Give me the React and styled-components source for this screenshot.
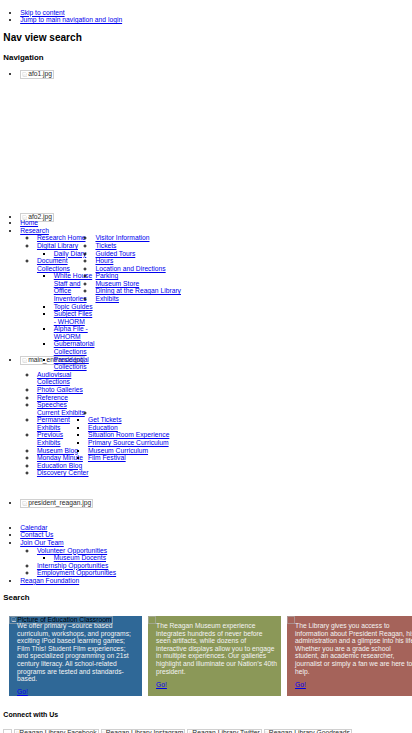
import React from "react";
import styled, { createGlobalStyle } from "styled-components";

const GlobalStyle = createGlobalStyle`
  html { scrollbar-width: none; background: #ffffff; }
  html, body { margin: 0; padding: 0; }
  body {
    font-family: "Liberation Sans", Arial, Helvetica, sans-serif;
    font-size: 6.73px;
    line-height: 7.58px;
    color: #000000;
  }
  ul { margin: 0; }
`;

const Page = styled.div`
  display: flow-root;
  padding-left: 3.36px;
  overflow-x: clip;
`;

const A = styled.a`
  color: #0000ee;
  text-decoration: underline;
`;

const SkipLinks = styled.ul`
  margin-top: 8.5px !important;
  padding-left: 16.8px;
  list-style-type: disc;
`;

const Title = styled.h1`
  margin: 8.2px 0 0;
  font-size: 10.09px;
  line-height: 11.6px;
  font-weight: 700;
`;

const Heading = styled.h2`
  margin: ${(p) => p.$mt} 0 0;
  font-size: ${(p) => p.$size || "7.87px"};
  line-height: 9px;
  font-weight: 700;
`;

const Stage = styled.div`
  display: grid;
  margin-top: 8.4px;
  & > * {
    grid-area: 1 / 1;
  }
`;

const Slides = styled.ul`
  padding-left: 16.8px;
  list-style-type: disc;
`;

const Slide = styled.li`
  height: ${(p) => p.$h};
`;

const Frame = styled.span`
  display: inline-block;
  box-sizing: border-box;
  border: 1px solid rgba(176, 176, 176, 0.6);
  padding: 0 1px 0 ${(p) => p.$pad || "0.5px"};
  line-height: ${(p) => p.$lh || "6.6px"};
  color: ${(p) => p.$ink || "#2a2a2a"};
  white-space: nowrap;
  vertical-align: baseline;
  ${(p) => (p.$w ? `width: ${p.$w};` : "")}
  ${(p) => (p.$h ? `height: ${p.$h};` : "")}
`;

const IconSvg = styled.svg`
  display: inline-block;
  vertical-align: middle;
  margin-right: ${(p) => p.$gap};
`;

function BrokenIcon({ size = 5.5, gap = "1px" }) {
  return (
    <IconSvg width={size} height={size} viewBox="0 0 16 16" $gap={gap}>
      <path
        d="M2 1.5h8.5l3.5 3.5v4.2l-2.4-1.6-2.6 2.2-2.6-2-4.4 3.4z"
        fill="none"
        stroke="#c4c4c4"
        strokeWidth="1.1"
      />
      <path d="M2 13.8l4.4-2.8 2.6 2 2.6-2.2 2.4 1.6v2.2H2z" fill="#dcdcdc" />
    </IconSvg>
  );
}

function BrokenImage({ alt, lh, ink, size, gap, pad, w, h }) {
  return (
    <Frame $lh={lh} $ink={ink} $pad={pad} $w={w} $h={h}>
      {alt ? (
        <>
          <BrokenIcon size={size} gap={gap} />
          {alt}
        </>
      ) : null}
    </Frame>
  );
}

const Menu = styled.ul`
  padding: 149px 0 0 16.8px;
  list-style-type: disc;
`;

const MegaRow = styled.div`
  display: flex;
  align-items: flex-start;
`;

const SubColumn = styled.ul`
  flex: none;
  box-sizing: content-box;
  width: ${(p) => p.$w || "auto"};
  padding-left: ${(p) => (p.$flush ? "0" : "16.8px")};
  list-style-type: ${(p) => p.$marker || "circle"};
  white-space: ${(p) => (p.$nowrap ? "nowrap" : "normal")};
`;

const DeepList = styled.ul`
  padding-left: 16.8px;
  list-style-type: ${(p) => p.$marker || "square"};
`;

const ColumnLabel = styled.div`
  flex: none;
  width: 58.5px;
  padding-left: 16.8px;
`;

const SiteLinks = styled.ul`
  margin-top: 14.6px !important;
  padding-left: 16.8px;
  list-style-type: disc;
`;

const Cards = styled.div`
  display: flex;
  gap: 6px;
  margin-top: 13.7px;
  padding-left: 6px;
`;

const Card = styled.div`
  flex: none;
  width: 133px;
  background: ${(p) => p.$bg};
  color: #f3f3f3;
`;

const CardMedia = styled.div`
  height: 6.5px;
  display: flex;
  align-items: flex-start;
`;

const CardBody = styled.div`
  padding-left: 7.7px;
`;

const CardText = styled.p`
  margin: 0;
  white-space: nowrap;
`;

const CardAction = styled.p`
  margin: 5.6px 0 0;
`;

const SocialRow = styled.div`
  display: flex;
  align-items: flex-start;
  gap: 1.9px;
  margin-top: 9.4px;
`;

const cards = [
  {
    bg: "#2f6897",
    alt: "Picture of Education Classroom",
    lines: [
      "We offer primary \u2013source based",
      "curriculum, workshops, and programs;",
      "exciting iPod based learning games;",
      "Film This! Student Film experiences;",
      "and specialized programming on 21st",
      "century literacy. All school-related",
      "programs are tested and standards-",
      "based.",
    ],
  },
  {
    bg: "#8b9858",
    lines: [
      "The Reagan Museum experience",
      "integrates hundreds of never before",
      "seen artifacts, while dozens of",
      "interactive displays allow you to engage",
      "in multiple experiences.  Our galleries",
      "highlight and illuminate our Nation\u2019s 40th",
      "president.",
    ],
  },
  {
    bg: "#a5635a",
    lines: [
      "The Library gives you access to",
      "information about President Reagan, his",
      "administration and a glimpse into his life.",
      "Whether you are a grade school",
      "student, an academic researcher,",
      "journalist or simply a fan we are here to",
      "help.",
    ],
  },
];

const slides = [
  { file: "afo1.jpg", h: "143px" },
  { file: "afo2.jpg", h: "143px" },
  { file: "main_entrance.jpg", h: "143px" },
  { file: "president_reagan.jpg", h: "10px" },
];

const socials = [
  "Reagan Library Facebook",
  "Reagan Library Instagram",
  "Reagan Library Twitter",
  "Reagan Library Goodreads",
];

export default function App() {
  return (
    <Page>
      <GlobalStyle />
      <SkipLinks>
        <li>
          <A href="#content">Skip to content</A>
        </li>
        <li>
          <A href="#nav">Jump to main navigation and login</A>
        </li>
      </SkipLinks>

      <Title>Nav view search</Title>
      <Heading $mt="9.4px">Navigation</Heading>

      <Stage>
        <Slides>
          {slides.map((s) => (
            <Slide key={s.file} $h={s.h}>
              <BrokenImage alt={s.file} />
            </Slide>
          ))}
        </Slides>

        <Menu>
          <li>
            <A href="#">Home</A>
          </li>
          <li>
            <A href="#">Research</A>
            <MegaRow>
              <SubColumn $w="58.5px">
                <li>
                  <A href="#">Research Home</A>
                </li>
                <li>
                  <A href="#">Digital Library</A>
                  <DeepList>
                    <li>
                      <A href="#">Daily Diary</A>
                    </li>
                  </DeepList>
                </li>
                <li>
                  <A href="#">Document Collections</A>
                  <DeepList>
                    <li>
                      <A href="#">White House Staff and Office Inventories</A>
                    </li>
                    <li>
                      <A href="#">Topic Guides</A>
                    </li>
                    <li>
                      <A href="#">Subject Files - WHORM</A>
                    </li>
                    <li>
                      <A href="#">Alpha File - WHORM</A>
                    </li>
                    <li>
                      <A href="#">Gubernatorial Collections</A>
                    </li>
                    <li>
                      <A href="#">Presidential Collections</A>
                    </li>
                  </DeepList>
                </li>
                <li>
                  <A href="#">Audiovisual Collections</A>
                </li>
                <li>
                  <A href="#">Photo Galleries</A>
                </li>
                <li>
                  <A href="#">Reference</A>
                </li>
                <li>
                  <A href="#">Speeches</A>
                </li>
              </SubColumn>
              <SubColumn $flush>
                <li>
                  <A href="#">Visitor Information</A>
                </li>
                <li>
                  <A href="#">Tickets</A>
                </li>
                <li>
                  <A href="#">Guided Tours</A>
                </li>
                <li>
                  <A href="#">Hours</A>
                </li>
                <li>
                  <A href="#">Location and Directions</A>
                </li>
                <li>
                  <A href="#">Parking</A>
                </li>
                <li>
                  <A href="#">Museum Store</A>
                </li>
                <li>
                  <A href="#">Dining at the Reagan Library</A>
                </li>
                <li>
                  <A href="#">Exhibits</A>
                </li>
              </SubColumn>
            </MegaRow>
            <MegaRow>
              <ColumnLabel>
                <A href="#">Current Exhibits</A>
              </ColumnLabel>
              <SubColumn $flush>
                <li>{"\u00a0"}</li>
              </SubColumn>
            </MegaRow>
            <MegaRow>
              <SubColumn $w="51px" $nowrap>
                <li>
                  <A href="#">
                    Permanent
                    <br />
                    Exhibits
                  </A>
                </li>
                <li>
                  <A href="#">
                    Previous
                    <br />
                    Exhibits
                  </A>
                </li>
                <li>
                  <A href="#">Museum Blog</A>
                </li>
                <li>
                  <A href="#">Monday Minute</A>
                </li>
                <li>
                  <A href="#">Education Blog</A>
                </li>
                <li>
                  <A href="#">Discovery Center</A>
                </li>
              </SubColumn>
              <SubColumn $flush $marker="square">
                <li>
                  <A href="#">Get Tickets</A>
                </li>
                <li>
                  <A href="#">Education</A>
                </li>
                <li>
                  <A href="#">Situation Room Experience</A>
                </li>
                <li>
                  <A href="#">Primary Source Curriculum</A>
                </li>
                <li>
                  <A href="#">Museum Curriculum</A>
                </li>
                <li>
                  <A href="#">Film Festival</A>
                </li>
              </SubColumn>
            </MegaRow>
          </li>
        </Menu>
      </Stage>

      <SiteLinks>
        <li>
          <A href="#">Calendar</A>
        </li>
        <li>
          <A href="#">Contact Us</A>
        </li>
        <li>
          <A href="#">Join Our Team</A>
          <DeepList $marker="circle">
            <li>
              <A href="#">Volunteer Opportunities</A>
              <DeepList $marker="square">
                <li>
                  <A href="#">Museum Docents</A>
                </li>
              </DeepList>
            </li>
            <li>
              <A href="#">Internship Opportunities</A>
            </li>
            <li>
              <A href="#">Employment Opportunities</A>
            </li>
          </DeepList>
        </li>
        <li>
          <A href="#">Reagan Foundation</A>
        </li>
      </SiteLinks>

      <Heading $mt="8.5px">Search</Heading>

      <Cards>
        {cards.map((c, i) => (
          <Card key={i} $bg={c.bg}>
            <CardMedia>
              {c.alt ? (
                <BrokenImage alt={c.alt} lh="5.3px" ink="#000000" />
              ) : (
                <BrokenImage w="7.7px" h="8px" />
              )}
            </CardMedia>
            <CardBody>
              <CardText>
                {c.lines.map((l, j) => (
                  <React.Fragment key={j}>
                    {j > 0 && <br />}
                    {l}
                  </React.Fragment>
                ))}
              </CardText>
              <CardAction>
                <A href="#">Go!</A>
              </CardAction>
            </CardBody>
          </Card>
        ))}
      </Cards>

      <Heading $mt="14.2px" $size="7px">
        Connect with Us
      </Heading>

      <SocialRow>
        <BrokenImage w="9px" h="8.6px" />
        {socials.map((s) => (
          <BrokenImage key={s} alt={s} size={3} gap="0.8px" pad="0.3px" />
        ))}
      </SocialRow>
    </Page>
  );
}
